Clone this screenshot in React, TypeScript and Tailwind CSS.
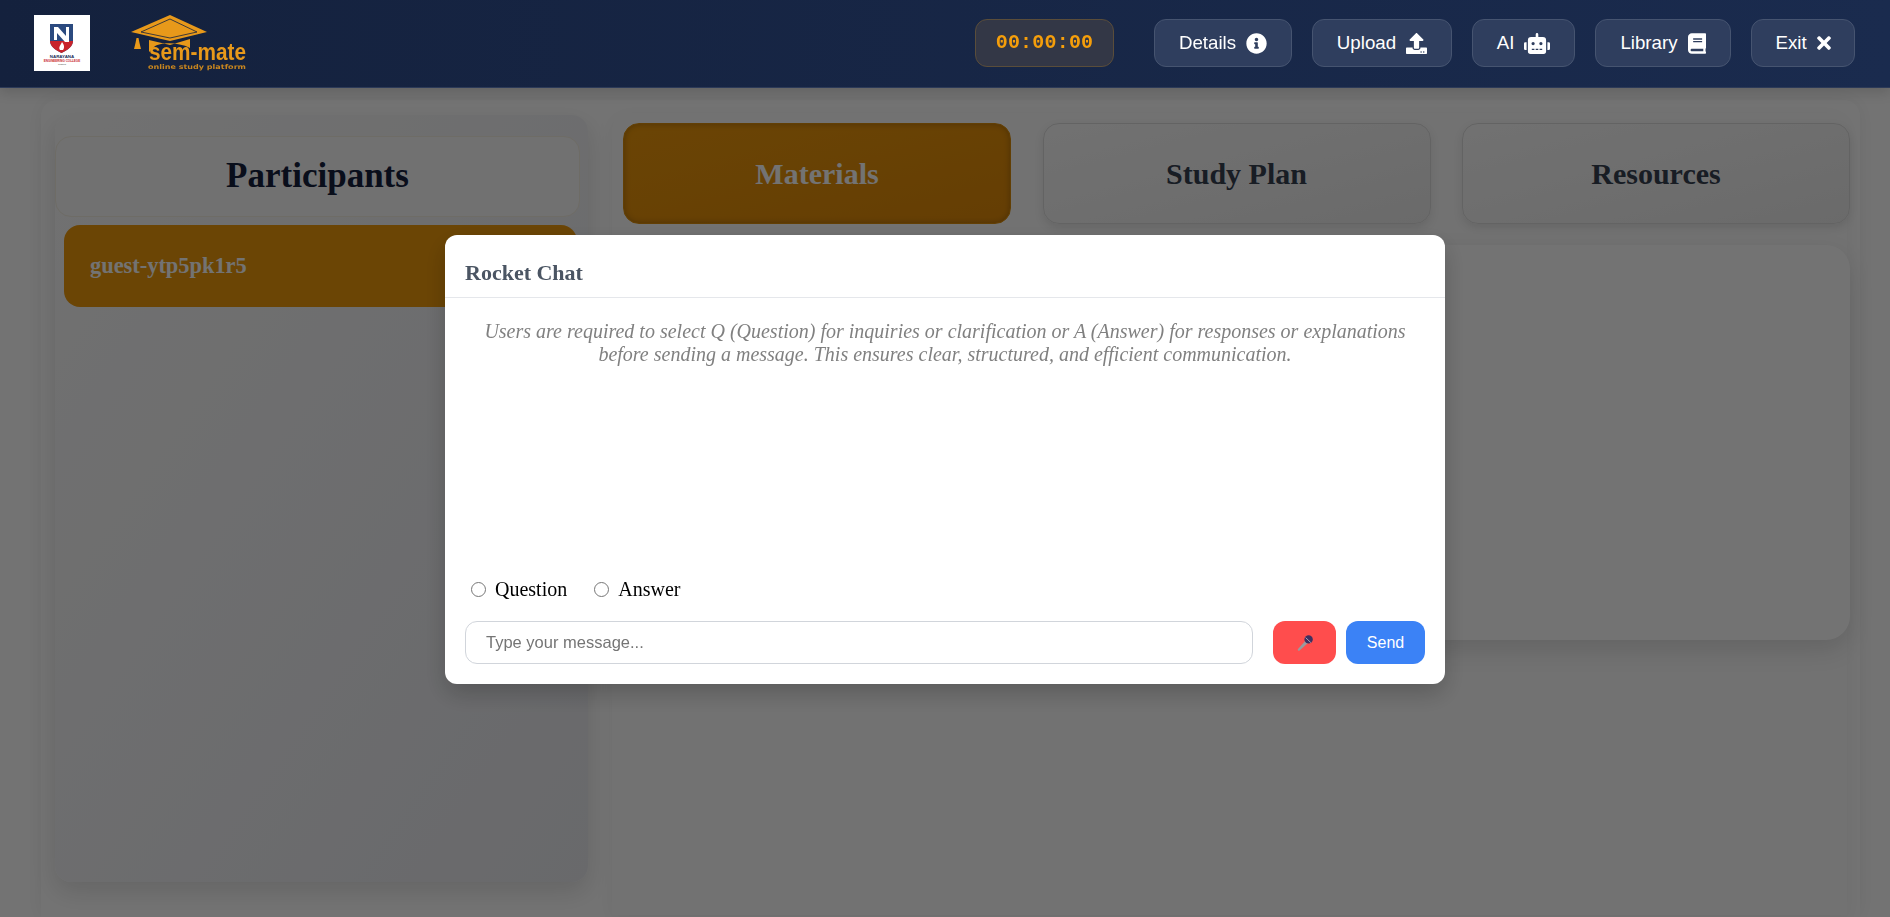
import { FaBook, FaInfoCircle, FaRobot, FaTimes, FaUpload } from "react-icons/fa";
import type { ReactNode } from "react";

const serif = "font-['Liberation_Serif',serif]";

const NavButton = ({ label, icon, width }: { label: string; icon: ReactNode; width: string }) => (
  <button className={`${width} flex h-12 items-center justify-center gap-[10px] rounded-xl border border-[#465470] bg-[#2f3e5e] text-[18.72px] text-white`}>
    <span>{label}</span>
    {icon}
  </button>
);

const CollegeLogo = () => (
  <div className="flex h-14 w-14 items-center justify-center bg-white">
    <svg viewBox="0 0 56 56" className="h-14 w-14">
      <path d="M16 9h23v17c0 5-5 9-11.500 12C21 35 16 31 16 26z" fill="#2b4a7f" />
      <path d="M16 26h23c0 5-5 9-11.500 12C21 35 16 31 16 26z" fill="#c8242b" />
      <path d="M20 12h4l8 9v-9h3v15h-4l-8-9v7h-3z" fill="#fff" />
      <path d="M26 35c-2-3 1-5 2-8 2 3 3 5 1 8z" fill="#fff" />
      <text x="28" y="42.500" textAnchor="middle" fontSize="4.400" fontWeight="700" fill="#1d2f5a" fontFamily="Liberation Sans">NARAYANA</text>
      <text x="28" y="47" textAnchor="middle" fontSize="3" fontWeight="700" fill="#c8242b" fontFamily="Liberation Sans">ENGINEERING COLLEGE</text>
      <text x="28" y="50" textAnchor="middle" fontSize="2.200" fill="#444" fontFamily="Liberation Sans">GUDUR</text>
    </svg>
  </div>
);

const SemMateLogo = () => (
  <svg viewBox="0 0 140 58" className="h-[58px] w-[140px]">
    <path d="M40 1 77 18 40 27 1 18z" fill="#e8991a" />
    <path d="M40 5 67 18 40 24 11 18z" fill="none" stroke="#14213d" strokeWidth="0.800" />
    <path d="M19 26 40 31 60 25v9C48 28 30 28 24 33l-5 5z" fill="#e8991a" />
    <path d="M6.500 24h2l1 5 1.500 6H4l1.500-6z" fill="#e8991a" />
    <text x="19" y="46" fontSize="23" fontWeight="700" fill="#e8991a" fontFamily="Liberation Sans" textLength="97" lengthAdjust="spacingAndGlyphs">sem-mate</text>
    <text x="18" y="55" fontSize="6.500" fontWeight="700" fill="#c8861f" fontFamily="DejaVu Sans" textLength="98" lengthAdjust="spacingAndGlyphs">online study platform</text>
  </svg>
);

const Header = () => (
  <header className="relative z-20 flex h-[88px] items-center border-b border-[#2c3a58] bg-gradient-to-r from-[#14213d] to-[#1a2b4e] pb-px pl-[34px] pr-[35px] shadow-[0_4px_12px_rgba(0,0,0,0.15)]">
    <CollegeLogo />
    <div className="ml-10">
      <SemMateLogo />
    </div>
    <div className="ml-auto flex items-center">
      <div className="mr-10 flex h-12 w-[139px] items-center justify-center rounded-xl border border-[#5a4d3a] bg-[#333746] font-['Liberation_Mono',monospace] text-xl font-bold tracking-[0.2px] text-[#f59e0b]">
        00:00:00
      </div>
      <div className="flex gap-5">
        <NavButton label="Details" width="w-[138px]" icon={<FaInfoCircle className="h-[21px] w-[21px]" />} />
        <NavButton label="Upload" width="w-[140px]" icon={<FaUpload className="h-[21px] w-[21px]" />} />
        <NavButton label="AI" width="w-[103px]" icon={<FaRobot className="h-[21px] w-[26px]" />} />
        <NavButton label="Library" width="w-[136px]" icon={<FaBook className="h-[21px] w-[18px]" />} />
        <NavButton label="Exit" width="w-[104px]" icon={<FaTimes className="h-5 w-[14px]" />} />
      </div>
    </div>
  </header>
);

const Participants = () => (
  <aside className="flex h-[767px] w-[533px] shrink-0 flex-col rounded-2xl bg-gradient-to-br from-[#fbfbfb] to-[#e8e9ee] pt-[21px] shadow-[0_10px_25px_rgba(0,0,0,0.12)]">
    <div className={`${serif} flex h-[81px] w-[525px] items-center justify-center rounded-2xl border border-[#f3efe2] bg-[#fafafa] text-[35px] font-bold text-[#14213d]`}>
      Participants
    </div>
    <div className={`${serif} ml-[9px] mt-2 flex h-[82px] w-[513px] items-center rounded-2xl bg-[#ed990c] pl-[26px] text-[22.4px] font-bold text-white`}>
      guest-ytp5pk1r5
    </div>
  </aside>
);

const Tab = ({ label, active }: { label: string; active?: boolean }) => (
  <div
    className={`${serif} flex h-[101px] w-[388px] items-center justify-center rounded-2xl border text-[30px] font-bold ${
      active
        ? "border-[#d98c0a] bg-gradient-to-br from-[#ec980c] to-[#e08a0a] text-white shadow-[inset_0_0_6px_rgba(0,0,0,0.25)]"
        : "border-[#dcdcdc] bg-gradient-to-br from-[#fbfbfb] to-[#ececec] text-[#374151] shadow-[0_4px_10px_rgba(0,0,0,0.1)]"
    }`}
  >
    {label}
  </div>
);

const MicEmoji = () => (
  <svg viewBox="0 0 18 18" className="h-[18px] w-[18px]">
    <path d="M2 15 10 6l2.500 2.500L3.600 16.600c-.5.4-1.200.2-1.600-.2-.3-.4-.4-1 0-1.400z" fill="#9a9a9e" />
    <circle cx="12.600" cy="5.400" r="4.200" fill="#3e2f5f" />
    <path d="m9.600 3.600 5.200 5" stroke="#a9a3b8" strokeWidth="1" />
  </svg>
);

const ChatModal = () => (
  <div className="fixed inset-0 z-10 flex justify-center bg-black/[0.55] pt-[235px]">
    <div className="flex h-[449px] w-[1000px] flex-col rounded-xl bg-white shadow-[0_10px_25px_rgba(0,0,0,0.2)]">
      <div className={`${serif} flex h-[63px] items-center border-b border-[#e5e7eb] px-5 pt-3 text-[22px] font-bold text-[#4b5563]`}>
        Rocket Chat
      </div>
      <p className={`${serif} mt-[22px] px-5 text-center text-[20px] leading-[23px] italic text-[#808080]`}>
        Users are required to select Q (Question) for inquiries or clarification or A (Answer) for responses or explanations
        <br />
        before sending a message. This ensures clear, structured, and efficient communication.
      </p>
      <div className={`${serif} mt-auto flex items-center px-[26px] text-[20px] text-black`}>
        <label className="flex items-center gap-[9px]">
          <input type="radio" name="kind" className="m-0 h-[15px] w-[15px]" />
          Question
        </label>
        <label className="ml-[27px] flex items-center gap-[9px]">
          <input type="radio" name="kind" className="m-0 h-[15px] w-[15px]" />
          Answer
        </label>
      </div>
      <div className="mb-5 mt-[17px] flex items-stretch px-5 font-['Liberation_Sans',sans-serif]">
        <input
          placeholder="Type your message..."
          className="h-[43px] w-[788px] rounded-xl border border-[#d1d5db] px-5 text-[16.5px] text-black outline-none placeholder:text-[#757575]"
        />
        <button className="ml-5 flex w-[63px] items-center justify-center rounded-xl bg-[#ff4d4d]">
          <MicEmoji />
        </button>
        <button className="ml-[10px] w-[79px] rounded-xl bg-[#3b82f6] text-base text-white">Send</button>
      </div>
    </div>
  </div>
);

export default function App() {
  return (
    <div className="h-[917px] overflow-hidden bg-white font-['Liberation_Sans',sans-serif]">
      <Header />
      <main className="ml-[41px] mt-3 flex h-[817px] w-[1819px] gap-6 rounded-t-2xl bg-white pl-[14px] pt-[15px] shadow-[0_0_20px_rgba(0,0,0,0.06)]">
        <Participants />
        <section className="-mt-[2px] h-[802px] w-[1235px] rounded-t-2xl bg-[#fcfcfc] pl-[11px] pt-[10px] shadow-[0_4px_20px_rgba(0,0,0,0.05)]">
          <div className="flex w-[1227px] justify-between">
            <Tab label="Materials" active />
            <Tab label="Study Plan" />
            <Tab label="Resources" />
          </div>
          <div className="mt-[21px] h-[395px] w-[1227px] rounded-3xl bg-white shadow-[0_10px_25px_rgba(0,0,0,0.12)]" />
        </section>
      </main>
      <ChatModal />
    </div>
  );
}
